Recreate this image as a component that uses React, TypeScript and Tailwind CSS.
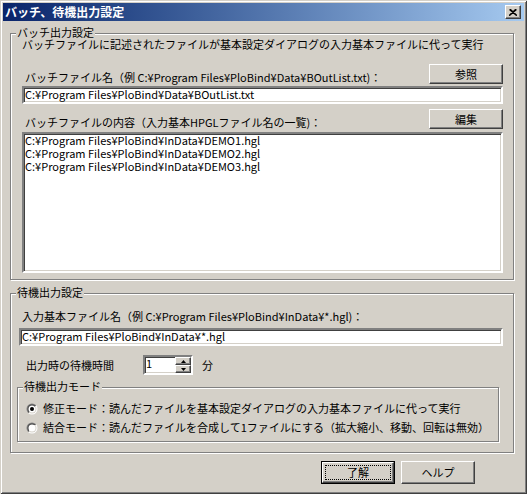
import React from "react";

const sunken =
  "border-2 border-t-[#808080] border-l-[#808080] border-b-white border-r-white shadow-[inset_1px_1px_0_#404040,inset_-1px_-1px_0_#d4d0c8] bg-white";
const raised =
  "border border-t-white border-l-white border-b-[#404040] border-r-[#404040] shadow-[inset_-1px_-1px_0_#808080] bg-[#d4d0c8]";

function Group({ label, className, children }: { label: string; className: string; children: React.ReactNode }) {
  return (
    <div className={`relative border border-[#808080] shadow-[inset_1px_1px_0_#fff,1px_1px_0_#fff] ${className}`}>
      <span className="absolute left-[5px] top-[-7px] bg-[#d4d0c8] px-[1px] leading-[11px]">{label}</span>
      {children}
    </div>
  );
}

function Button({ children }: { children: React.ReactNode }) {
  return (
    <div className={`flex h-[20px] w-[74px] shrink-0 items-center justify-center ${raised}`}>{children}</div>
  );
}

function Radio({ checked }: { checked?: boolean }) {
  return (
    <svg width="12" height="12" viewBox="0 0 12 12" className="shrink-0">
      <defs>
        <linearGradient id="ro" x1="0" y1="0" x2="1" y2="1">
          <stop offset="0.5" stopColor="#808080" />
          <stop offset="0.5" stopColor="#ffffff" />
        </linearGradient>
        <linearGradient id="ri" x1="0" y1="0" x2="1" y2="1">
          <stop offset="0.5" stopColor="#404040" />
          <stop offset="0.5" stopColor="#d4d0c8" />
        </linearGradient>
      </defs>
      <circle cx="6" cy="6" r="5.5" fill="url(#ro)" />
      <circle cx="6" cy="6" r="4.5" fill="url(#ri)" />
      <circle cx="6" cy="6" r="3.5" fill="#fff" />
      {checked && <circle cx="6" cy="6" r="2" fill="#000" />}
    </svg>
  );
}

export default function App() {
  return (
    <div className="h-[494px] w-[527px] bg-[#d4d0c8] p-[3px] font-['Noto_Sans_CJK_JP','Liberation_Sans',sans-serif] text-[11px] leading-[13px] text-black shadow-[inset_1px_1px_0_#d4d0c8,inset_-1px_-1px_0_#404040,inset_2px_2px_0_#fff,inset_-2px_-2px_0_#808080]">
      {/* title bar */}
      <div className="flex h-[18px] items-center bg-linear-to-r from-[#0a246a] to-[#a6caf0] pl-[2px] pr-[3px]">
        <span className="flex-1 text-[12px] font-bold leading-[14px] text-white">バッチ、待機出力設定</span>
        <div className={`flex h-[14px] w-[16px] items-center justify-center ${raised}`}>
          <svg width="8" height="7" viewBox="0 0 8 7">
            <path d="M0.5 0.5 L7.5 6.5 M7.5 0.5 L0.5 6.5 M1.5 0.5 L8 6.5 M6.5 0.5 L0 6.5" stroke="#000" strokeWidth="1.2" />
          </svg>
        </div>
      </div>

      <Group label="バッチ出力設定" className="ml-[7px] mt-[12px] h-[247px] w-[504px] pl-[11px] pr-[10px] pt-[4px]">
        <p>バッチファイルに記述されたファイルが基本設定ダイアログの入力基本ファイルに代って実行</p>
        <div className="mt-[13px] flex h-[20px] items-end justify-between">
          <span className="ml-[3px]">バッチファイル名（例 C:¥Program Files¥PloBind¥Data¥BOutList.txt)：</span>
          <Button>参照</Button>
        </div>
        <div className={`mt-[2px] h-[18px] pl-[1px] ${sunken}`}>C:¥Program Files¥PloBind¥Data¥BOutList.txt</div>
        <div className="mt-[5px] flex h-[20px] items-end justify-between">
          <span className="ml-[3px]">バッチファイルの内容（入力基本HPGLファイル名の一覧)：</span>
          <Button>編集</Button>
        </div>
        <div className={`mt-[3px] h-[141px] pl-[1px] ${sunken}`}>
          <div>C:¥Program Files¥PloBind¥InData¥DEMO1.hgl</div>
          <div>C:¥Program Files¥PloBind¥InData¥DEMO2.hgl</div>
          <div>C:¥Program Files¥PloBind¥InData¥DEMO3.hgl</div>
        </div>
      </Group>

      <Group label="待機出力設定" className="ml-[7px] mt-[13px] h-[160px] w-[504px] pl-[8px] pr-[10px] pt-[16px]">
        <p className="ml-[3px]">入力基本ファイル名（例 C:¥Program Files¥PloBind¥InData¥*.hgl)：</p>
        <div className={`mt-[5px] h-[18px] pl-[1px] ${sunken}`}>C:¥Program Files¥PloBind¥InData¥*.hgl</div>
        <div className="mt-[9px] flex h-[20px] items-center">
          <span className="ml-[7px] w-[117px]">出力時の待機時間</span>
          <div className={`flex h-[20px] w-[50px] ${sunken}`}>
            <span className="flex-1 pl-[1px]">1</span>
            <div className="flex w-[16px] flex-col">
              <div className={`flex h-[8px] items-center justify-center ${raised}`}>
                <svg width="5" height="3" viewBox="0 0 5 3">
                  <path d="M2.5 0 L5 3 L0 3 Z" fill="#000" />
                </svg>
              </div>
              <div className={`flex h-[8px] items-center justify-center ${raised}`}>
                <svg width="5" height="3" viewBox="0 0 5 3">
                  <path d="M0 0 L5 0 L2.5 3 Z" fill="#000" />
                </svg>
              </div>
            </div>
          </div>
          <span className="ml-[9px]">分</span>
        </div>
        <Group label="待機出力モード" className="ml-[-2px] mt-[12px] h-[55px] w-[482px] pl-[8px] pt-[14px]">
          <div className="flex h-[13px] items-center gap-[5px]">
            <Radio checked />
            <span>修正モード：読んだファイルを基本設定ダイアログの入力基本ファイルに代って実行</span>
          </div>
          <div className="mt-[6px] flex h-[13px] items-center gap-[5px]">
            <Radio />
            <span>結合モード：読んだファイルを合成して1ファイルにする（拡大縮小、移動、回転は無効）</span>
          </div>
        </Group>
      </Group>

      <div className="mt-[8px] flex justify-end gap-[6px] pr-[49px]">
        <div className="flex h-[23px] w-[74px] border border-black">
          <div className={`flex flex-1 p-[2px] ${raised}`}>
            <div className="flex flex-1 items-center justify-center border border-dotted border-black">了解</div>
          </div>
        </div>
        <div className={`flex h-[23px] w-[74px] items-center justify-center ${raised}`}>ヘルプ</div>
      </div>
    </div>
  );
}
